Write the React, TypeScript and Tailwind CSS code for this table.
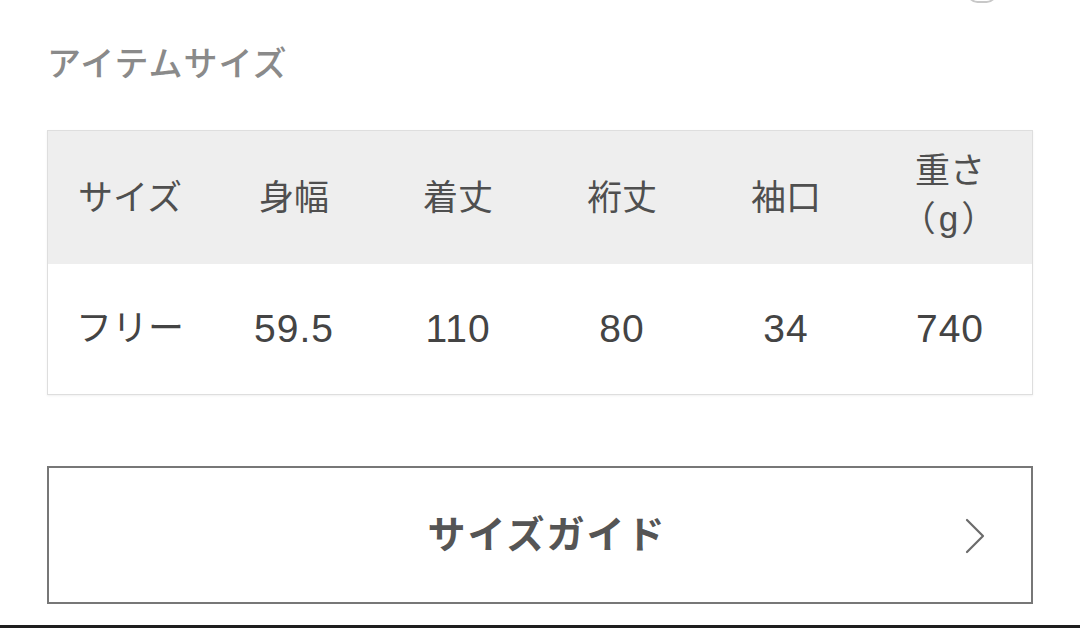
import { FC } from 'react';

const font = { fontFamily: '"Liberation Sans", "Noto Sans CJK JP", sans-serif' };

const headers = ['サイズ', '身幅', '着丈', '裄丈', '袖口'];
const values = ['フリー', '59.5', '110', '80', '34', '740'];

const ChevronRight: FC = () => (
  <svg width="24" height="38" viewBox="0 0 24 38" fill="none">
    <path d="M4 3 L20 19 L4 35" stroke="#6b6b6b" strokeWidth="2.2" strokeLinecap="round" strokeLinejoin="round" />
  </svg>
);

const App: FC = () => {
  return (
    <div className="relative w-[1080px] h-[628px] bg-white overflow-hidden" style={font}>
      <div className="absolute left-[967px] top-[-18px] w-[30px] h-[21px] rounded-full border-2 border-[#c8c8c8]" />
      <div className="flex flex-col px-[47px] pt-[44px]">
        <h2 className="text-[34px] leading-[40px] font-medium text-[#8a8a8a] tracking-[1px]">アイテムサイズ</h2>

        <div className="mt-[46px] border border-[#dedede] shadow-[0_1px_2px_rgba(0,0,0,0.06)]">
          <div className="grid grid-cols-6 h-[133px] bg-[#eeeeee] items-center text-[35px] text-[#4f4f4f]">
            {headers.map((h) => (
              <div key={h} className="text-center leading-[40px]">{h}</div>
            ))}
            <div className="text-center leading-[48px] pb-[6px]">
              重さ
              <br />
              <span className="tracking-[3px]">（g）</span>
            </div>
          </div>
          <div className="grid grid-cols-6 h-[130px] bg-white items-center text-[39px] text-[#444]">
            {values.map((v, i) => (
              <div key={v} className={i === 0 ? 'text-center leading-[40px] text-[36px]' : 'text-center leading-[40px] tracking-[1px]'}>
                {v}
              </div>
            ))}
          </div>
        </div>

        <button className="mt-[71px] h-[138px] border-2 border-[#777] bg-white flex items-center relative">
          <span className="flex-1 text-center pl-[14px] text-[38px] font-bold text-[#555] tracking-[2px]">サイズガイド</span>
          <span className="absolute right-[44px] top-[49px]">
            <ChevronRight />
          </span>
        </button>
      </div>
      <div className="absolute left-0 right-0 bottom-0 h-[3px] bg-[#1e1e1e]" />
    </div>
  );
};

export default App;
